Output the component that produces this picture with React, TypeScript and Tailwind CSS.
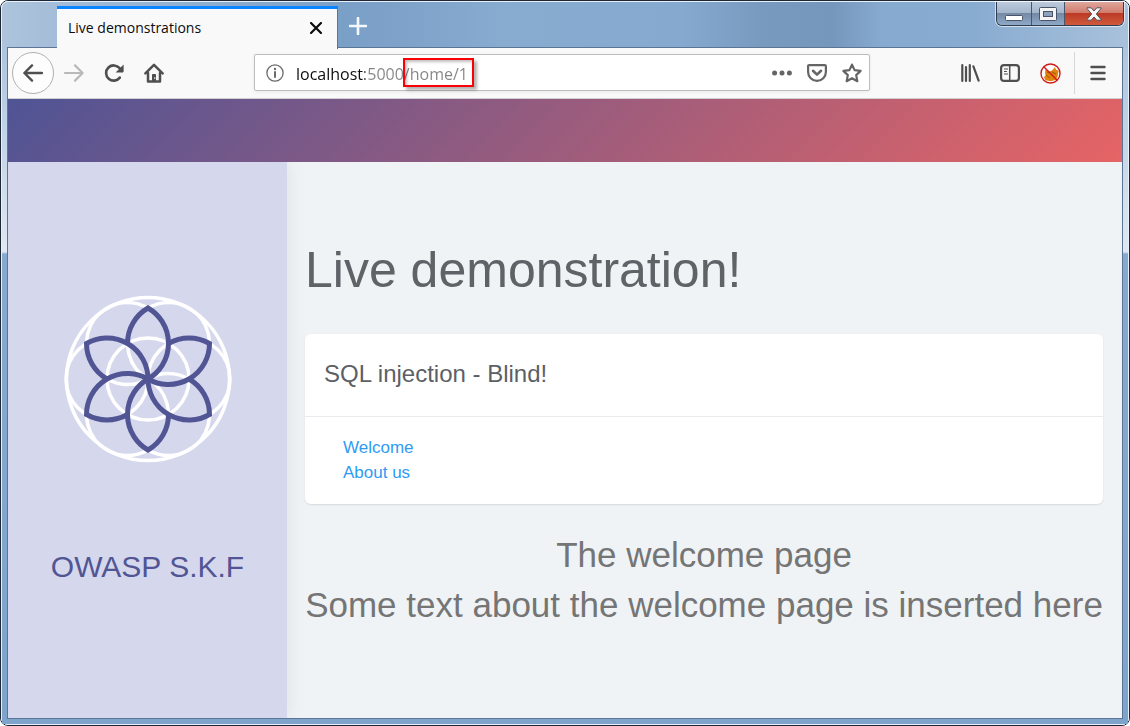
import type { ReactNode } from "react";

type IconButtonProps = {
  label: string;
  className: string;
  children: ReactNode;
};

function IconButton({ label, className, children }: IconButtonProps) {
  return (
    <button
      type="button"
      aria-label={label}
      className={`flex shrink-0 items-center justify-center ${className}`}
    >
      {children}
    </button>
  );
}

function BackIcon() {
  return (
    <svg className="size-5" viewBox="0 0 20 20" fill="none" stroke="#4f4f50" strokeWidth="2.4" strokeLinecap="round" strokeLinejoin="round">
      <path d="M19 10H1.5M9 2.4 1.4 10 9 17.6" />
    </svg>
  );
}

function ForwardIcon() {
  return (
    <svg className="size-5" viewBox="0 0 20 20" fill="none" stroke="#b9b9ba" strokeWidth="2.2" strokeLinecap="round" strokeLinejoin="round">
      <path d="M1 10h17.5M11 2.4 18.6 10 11 17.6" />
    </svg>
  );
}

function ReloadIcon() {
  return (
    <svg className="size-5" viewBox="0 0 20 20" fill="none" stroke="#4f4f50" strokeWidth="2.6" strokeLinecap="round">
      <path d="M15.8 14.6A7.6 7.6 0 1 1 15.6 5.2" />
      <path d="M19.6 1.4v7.2c0 .5-.3.8-.8.8H11.6z" fill="#4f4f50" stroke="none" />
    </svg>
  );
}

function HomeIcon() {
  return (
    <svg className="size-5" viewBox="0 0 20 20" fill="none" stroke="#4f4f50" strokeWidth="2.5" strokeLinecap="round" strokeLinejoin="round">
      <path d="M1.4 10.4 10 1.8l8.6 8.6" />
      <path d="M4 10v8.4h12V10" />
      <path d="M8 18.5V12c0-.5.4-1 1-1h2c.6 0 1 .5 1 1v6.5z" fill="#4f4f50" stroke="none" />
      <path d="M10.8 14.6v1" stroke="#f9f9fa" strokeWidth="1" />
    </svg>
  );
}

function InfoIcon() {
  return (
    <svg className="size-[18px]" viewBox="0 0 18 18" fill="none" stroke="#6b6b6c">
      <circle cx="9" cy="9" r="8.1" strokeWidth="1.3" />
      <path d="M9 8v5" strokeWidth="2" strokeLinecap="round" />
      <circle cx="9" cy="5" r="1.2" fill="#6b6b6c" stroke="none" />
    </svg>
  );
}

function DotsIcon() {
  return (
    <svg className="size-5" viewBox="0 0 20 20" fill="#656566">
      <circle cx="2.6" cy="10" r="2.5" />
      <circle cx="10" cy="10" r="2.5" />
      <circle cx="17.4" cy="10" r="2.5" />
    </svg>
  );
}

function PocketIcon() {
  return (
    <svg className="size-5" viewBox="0 0 20 20" fill="none" stroke="#656566" strokeWidth="2.2" strokeLinecap="round" strokeLinejoin="round">
      <path d="M2.2 2.1h15.6c.7 0 1.1.4 1.1 1.1V9a8.9 8.9 0 0 1-17.8 0V3.2c0-.7.4-1.1 1.1-1.1z" />
      <path d="m6 7.8 4 3.8 4-3.8" strokeWidth="2.6" />
    </svg>
  );
}

function StarIcon() {
  return (
    <svg className="size-5" viewBox="0 0 20 20" fill="none" stroke="#656566" strokeWidth="2.2" strokeLinejoin="round">
      <path d="m10 1.6 2.6 5.5 6 .8-4.4 4.2 1.1 6.1L10 15.3l-5.3 2.9 1.1-6.1L1.4 7.9l6-.8z" />
    </svg>
  );
}

function LibraryIcon() {
  return (
    <svg className="size-5" viewBox="0 0 20 20" fill="none" stroke="#4f4f50" strokeWidth="2.2" strokeLinecap="round">
      <path d="M2.3 2v16M6 4v14M9.8 2v16M13.4 3.3 18.6 17.6" />
    </svg>
  );
}

function SidebarIcon() {
  return (
    <svg className="size-5" viewBox="0 0 20 20" fill="none" stroke="#4f4f50">
      <rect x="1.1" y="2.1" width="17.8" height="15.8" rx="3" strokeWidth="2.2" />
      <path d="M9.7 2v16" strokeWidth="1.5" />
      <path d="M4 6h4M4 8.5h3M4 11h4" strokeWidth="1.2" />
    </svg>
  );
}

function BlockedFoxIcon() {
  return (
    <svg className="size-[21px]" viewBox="0 0 21 21" fill="none">
      <circle cx="10.5" cy="10.5" r="9.5" fill="#fdfdfd" />
      <path d="M5 9.500 5.500 6 8 8.500 11 8l1.500-1L15 4l.8 2.600 2.700 1.200-.8 5.500-1.700 3.400-5 1.500-5.500-1L3.800 14l1.700-1.200z" fill="#e1840c" />
      <path d="m6 12 4 3M12 9l4 2M7 9l2 1" stroke="#9a570c" strokeWidth="1" />
      <circle cx="10.5" cy="10.5" r="9.5" stroke="#cf1a1a" strokeWidth="1.4" />
      <path d="m3.8 3.8 13.4 13.4" stroke="#cf1a1a" strokeWidth="1.4" />
    </svg>
  );
}

function MenuIcon() {
  return (
    <svg className="size-5" viewBox="0 0 20 20" stroke="#4f4f50" strokeWidth="2.4" strokeLinecap="round">
      <path d="M3.5 4h13M3.500 10h13M3.500 16h13" />
    </svg>
  );
}

const ANGLES = [0, 60, 120, 180, 240, 300];

function FlowerLogo() {
  return (
    <svg className="size-[168px]" viewBox="-84 -84 168 168" fill="none" role="img" aria-label="OWASP S.K.F logo">
      <g stroke="#ffffff" strokeWidth="3.5">
        <circle r="81.5" />
        <circle r="41" />
        {ANGLES.map((angle) => (
          <circle key={angle} cx="41" r="41" transform={`rotate(${angle})`} />
        ))}
      </g>
      <g stroke="#515594" strokeWidth="5" strokeLinejoin="miter">
        {ANGLES.map((angle) => (
          <path
            key={angle}
            d="M-20.5-35.5A41 41 0 0 1 0-71A41 41 0 0 1 0 0"
            transform={`rotate(${angle})`}
          />
        ))}
      </g>
    </svg>
  );
}

function WindowControls() {
  return (
    <div className="mr-1 flex h-6 overflow-hidden rounded-b-md border border-t-0 border-[#2f3d50] shadow-[0_0_0_1px_rgba(255,255,255,0.6)]">
      <IconButton
        label="Minimize"
        className="w-[35px] border-r border-[#47566b] bg-[linear-gradient(180deg,#bccbdd_0%,#a3b5ca_48%,#7489a4_50%,#8ea9c7_100%)]"
      >
        <svg className="mt-2 h-[6px] w-[18px]" viewBox="0 0 18 6">
          <rect x=".5" y=".5" width="17" height="5" rx="1" fill="#fff" stroke="#4a5468" />
        </svg>
      </IconButton>
      <IconButton
        label="Maximize"
        className="w-[33px] border-r border-[#47566b] bg-[linear-gradient(180deg,#bccbdd_0%,#a3b5ca_48%,#7489a4_50%,#8ea9c7_100%)]"
      >
        <svg className="h-[14px] w-[18px]" viewBox="0 0 18 14">
          <rect x=".5" y=".5" width="17" height="13" rx="1" fill="#f4f4f4" stroke="#4a5468" />
          <rect x="4.5" y="4.5" width="9" height="5" fill="#8ba0bb" stroke="#4a5468" />
        </svg>
      </IconButton>
      <IconButton
        label="Close window"
        className="w-[58px] bg-[linear-gradient(180deg,#e0a79d_0%,#d07a6b_48%,#bd3a25_50%,#cf5a3c_100%)]"
      >
        <svg className="h-[14px] w-4" viewBox="0 0 16 14">
          <path
            d="M1 .8h4.2L8 4 10.8.8H15v.8L10.3 7l4.7 5.4v.8h-4.2L8 10l-2.8 3.2H1v-.8L5.7 7 1 1.6z"
            fill="#f7f7f7"
            stroke="#554d5b"
          />
        </svg>
      </IconButton>
    </div>
  );
}

function TitleBar() {
  return (
    <div className="relative z-10 flex h-[46px] items-start justify-between">
      <div className="flex items-start pt-1 pl-[55px]">
        <div className="flex h-[43px] w-[281px] items-center border-t-3 border-r border-t-[#0a84ff] border-r-[#5b7694] bg-[#f9f9fa] pr-3 pb-0.5 pl-[11px]">
          <span className="flex-1 text-sm text-[#0c0c0d]">Live demonstrations</span>
          <IconButton label="Close tab" className="size-[18px]">
            <svg className="size-3" viewBox="0 0 12 12" stroke="#0c0c0d" strokeWidth="2.2" strokeLinecap="round">
              <path d="m1 1 10 10M11 1 1 11" />
            </svg>
          </IconButton>
        </div>
        <IconButton label="New tab" className="h-10 w-10">
          <svg className="size-[18px]" viewBox="0 0 18 18" stroke="#f4f7fb" strokeWidth="2.6" strokeLinecap="round">
            <path d="M9 1v16M1 9h16" />
          </svg>
        </IconButton>
      </div>
      <WindowControls />
    </div>
  );
}

function AddressBar() {
  return (
    <div className="relative mx-20 mt-0.5 flex h-[37px] min-w-0 flex-1 items-center rounded-xs border border-[#bdbdbe] bg-white pl-[11px] shadow-[0_1px_4px_rgba(0,0,0,0.06)]">
      <InfoIcon />
      <input
        type="text"
        aria-label="Address"
        defaultValue="localhost:5000/home/1"
        className="ml-3 min-w-0 flex-1 bg-[linear-gradient(90deg,#0c0c0d_69px,#858587_69px)] bg-clip-text pt-0.5 text-base text-transparent outline-none"
      />
      <IconButton label="Page actions" className="w-[35px]">
        <DotsIcon />
      </IconButton>
      <IconButton label="Save to Pocket" className="w-[35px]">
        <PocketIcon />
      </IconButton>
      <IconButton label="Bookmark this page" className="w-[35px]">
        <StarIcon />
      </IconButton>
      <div className="pointer-events-none absolute top-[3px] left-[148px] h-[29px] w-[71px] border-2 border-[#fb0007] shadow-[3px_3px_3px_rgba(0,0,0,0.3),inset_2px_2px_3px_rgba(0,0,0,0.25)]" />
    </div>
  );
}

function Toolbar() {
  return (
    <nav className="flex h-[51px] items-start border-b border-[#d0d0d3] bg-[#f9f9fa] px-1 pt-1">
      <IconButton label="Back" className="size-[42px] rounded-full border border-[#b1b1b3] bg-[#fdfdfd]">
        <BackIcon />
      </IconButton>
      <IconButton label="Forward" className="h-[42px] w-10">
        <ForwardIcon />
      </IconButton>
      <IconButton label="Reload" className="h-[42px] w-10">
        <ReloadIcon />
      </IconButton>
      <IconButton label="Home" className="h-[42px] w-10">
        <HomeIcon />
      </IconButton>
      <AddressBar />
      <IconButton label="Library" className="h-[42px] w-10">
        <LibraryIcon />
      </IconButton>
      <IconButton label="Sidebars" className="h-[42px] w-10">
        <SidebarIcon />
      </IconButton>
      <IconButton label="Blocked extension" className="h-[42px] w-10">
        <BlockedFoxIcon />
      </IconButton>
      <div className="ml-1 h-[42px] w-px bg-[#d7d7db]" />
      <IconButton label="Open menu" className="ml-[3px] h-[42px] w-10">
        <MenuIcon />
      </IconButton>
    </nav>
  );
}

function Page() {
  return (
    <div className="flex flex-1 flex-col bg-[#eff3f6] font-['Liberation_Sans',Arial,sans-serif]">
      <header className="h-[63px] bg-[linear-gradient(135deg,#4f5495_0%,#e66465_100%)]" />
      <div className="flex flex-1 overflow-hidden">
        <aside className="flex w-[279px] shrink-0 flex-col items-center bg-[#d5d7ed] pt-[133px] shadow-[0_0_20px_rgba(0,0,0,0.08)]">
          <FlowerLogo />
          <p className="mt-20 text-3xl leading-12 text-[#515594]">OWASP S.K.F</p>
        </aside>
        <main className="min-w-0 flex-1 pt-[78px] pr-[19px] pl-[18px]">
          <h1 className="text-[50px] leading-[60px] text-[#5f6368]">Live demonstration!</h1>
          <section className="mt-[34px] rounded-md bg-white shadow-[0_1px_2px_rgba(0,0,0,0.1)]">
            <h2 className="border-b border-[#e9ebee] px-[19px] pt-6 pb-[26px] text-2xl leading-8 text-[#5c5f66]">
              SQL injection - Blind!
            </h2>
            <div className="flex flex-col items-start px-[38px] pt-[18px] pb-[19px] text-[17px] leading-[25px] text-[#2f9bf4]">
              <a href="#welcome">Welcome</a>
              <a href="#about">About us</a>
            </div>
          </section>
          <div className="mt-[26px] text-center text-[35px] leading-[50px] text-[#757575]">
            <p>The welcome page</p>
            <p>Some text about the welcome page is inserted here</p>
          </div>
        </main>
      </div>
    </div>
  );
}

export default function App() {
  return (
    <div className="flex min-h-screen flex-col rounded-lg border border-[#1d2735] font-['Open_Sans','Noto_Sans',sans-serif]">
      <div className="flex flex-1 flex-col rounded-[7px] border border-[#e8f1fa] bg-[linear-gradient(90deg,#adc4dc_0px,#a3bcd8_60px,#7ba0c7_340px,#7da1c8_390px,#88abd0_500px,#86a9cf_680px,#789abf_760px,#7697bc_830px,#87aad0_880px,#88abd0_970px,#a9c2dc_1128px)]">
        <TitleBar />
        <div className="flex flex-1 flex-col bg-[linear-gradient(180deg,#adc5de_0px,#dfe8f2_204px,#86a9cf_206px,#7fa4cb_100%)] px-[5px] pb-[5px]">
          <div className="-mt-px flex flex-1 flex-col border border-[#5b7694]">
            <Toolbar />
            <Page />
          </div>
        </div>
      </div>
    </div>
  );
}
